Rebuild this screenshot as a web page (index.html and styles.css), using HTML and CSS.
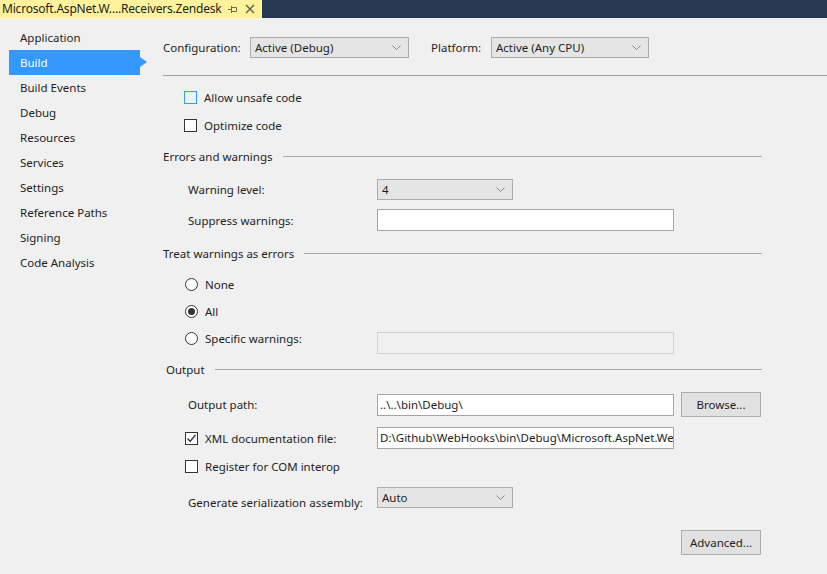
FILE: index.html
```html
<!DOCTYPE html>
<html>
<head>
<meta charset="utf-8">
<link rel="stylesheet" href="styles.css">
</head>
<body>
<div class="tabbar">
  <div class="tab">
    <span class="tab-title">Microsoft.AspNet.W....Receivers.Zendesk</span>
    <svg class="pin" width="10" height="8" viewBox="0 0 10 8"><path d="M0 4.5H3.5M3.5 1V8M3.5 2.5H8.5V6.5H3.5" fill="none" stroke="#6b6a55" stroke-width="1"/></svg>
    <svg class="close" width="10" height="10" viewBox="0 0 10 10"><path d="M1 1L9 9M9 1L1 9" fill="none" stroke="#5e5d4c" stroke-width="1.4"/></svg>
  </div>
</div>
<div class="tabgap"></div>
<div class="main">
  <nav class="sidebar">
    <div class="nav-item">Application</div>
    <div class="nav-item active">Build</div>
    <div class="nav-item">Build Events</div>
    <div class="nav-item">Debug</div>
    <div class="nav-item">Resources</div>
    <div class="nav-item">Services</div>
    <div class="nav-item">Settings</div>
    <div class="nav-item">Reference Paths</div>
    <div class="nav-item">Signing</div>
    <div class="nav-item">Code Analysis</div>
  </nav>
  <div class="content">
    <div class="config-row">
      <span class="lbl-config">Configuration:</span>
      <div class="combo combo-config"><span>Active (Debug)</span><svg width="9" height="5" viewBox="0 0 9 5"><path d="M0.5 0.5L4.5 4.5L8.5 0.5" fill="none" stroke="#8a8a8a"/></svg></div>
      <span class="lbl-platform">Platform:</span>
      <div class="combo combo-platform"><span>Active (Any CPU)</span><svg width="9" height="5" viewBox="0 0 9 5"><path d="M0.5 0.5L4.5 4.5L8.5 0.5" fill="none" stroke="#8a8a8a"/></svg></div>
    </div>
    <div class="rule"></div>

    <div class="section">
      <div class="checks">
        <div class="check-row"><span class="cb cb-hover"></span>Allow unsafe code</div>
        <div class="check-row"><span class="cb"></span>Optimize code</div>
      </div>

      <div class="group-head">Errors and warnings</div>
      <div class="form-row row-warn">
        <span class="form-lbl">Warning level:</span>
        <div class="combo combo-small"><span>4</span><svg width="9" height="5" viewBox="0 0 9 5"><path d="M0.5 0.5L4.5 4.5L8.5 0.5" fill="none" stroke="#8a8a8a"/></svg></div>
      </div>
      <div class="form-row row-suppress">
        <span class="form-lbl">Suppress warnings:</span>
        <div class="tb"></div>
      </div>

      <div class="group-head head-treat">Treat warnings as errors</div>
      <div class="radios">
        <div class="radio-row"><span class="rb"></span>None</div>
        <div class="radio-row"><span class="rb rb-on"></span>All</div>
        <div class="radio-row"><span class="rb"></span><span class="radio-lbl">Specific warnings:</span><div class="tb tb-disabled"></div></div>
      </div>

      <div class="group-head head-output">Output</div>
      <div class="form-row row-outpath">
        <span class="form-lbl">Output path:</span>
        <div class="tb">..\..\bin\Debug\</div>
        <div class="btn">Browse...</div>
      </div>
      <div class="form-row row-xml">
        <span class="form-lbl check-lbl"><span class="cb cb-checked"><svg width="11" height="11" viewBox="0 0 11 11"><path d="M1.5 5.5L4.2 8.2L9.5 2" fill="none" stroke="#333" stroke-width="1.3"/></svg></span>XML documentation file:</span>
        <div class="tb">D:\Github\WebHooks\bin\Debug\Microsoft.AspNet.WebHooks.Receivers.Zendesk.xml</div>
      </div>
      <div class="form-row row-com">
        <span class="form-lbl check-lbl"><span class="cb"></span>Register for COM interop</span>
      </div>
      <div class="form-row row-serial">
        <span class="form-lbl serial-lbl">Generate serialization assembly:</span>
        <div class="combo combo-small"><span>Auto</span><svg width="9" height="5" viewBox="0 0 9 5"><path d="M0.5 0.5L4.5 4.5L8.5 0.5" fill="none" stroke="#8a8a8a"/></svg></div>
      </div>
      <div class="row-advanced">
        <div class="btn">Advanced...</div>
      </div>
    </div>
  </div>
</div>
</body>
</html>
```
FILE: styles.css
```css
* { box-sizing: border-box; }
body {
  margin: 0;
  width: 827px;
  height: 574px;
  overflow: hidden;
  background: #f0f0f0;
  font-family: "Noto Sans", "Open Sans", sans-serif;
  font-size: 11.5px;
  color: #1e1e1e;
}
.tabbar { height: 18px; background: #293955; display: flex; }
.tab {
  width: 262px;
  background: #fff29d;
  display: flex;
  align-items: center;
  padding: 0 7px 0 2px;
}
.tab-title { flex: 1; line-height: 18px; font-size: 12px; letter-spacing: -0.2px; white-space: nowrap; overflow: hidden; color: #1e1e1e; }
.pin { margin-left: 4px; flex: none; }
.close { margin-left: 7px; flex: none; }
.tabgap { height: 2px; background: linear-gradient(to right, #faf6dc 0 262px, #eceef2 262px); }

.main { display: flex; }
.sidebar { width: 145px; flex: none; padding-top: 5px; }
.nav-item { height: 25px; line-height: 25px; padding-left: 20px; white-space: nowrap; position: relative; }
.nav-item.active {
  background: #3399ff;
  color: #fff;
  margin-left: 9px;
  padding-left: 11px;
  width: 131px;
}
.nav-item.active::after {
  content: "";
  position: absolute;
  right: -7px;
  top: 7px;
  border-left: 7px solid #3399ff;
  border-top: 5.5px solid transparent;
  border-bottom: 5.5px solid transparent;
}

.content { flex: 1; padding-top: 17px; padding-left: 18px; }
.config-row { display: flex; align-items: center; height: 21px; }
.lbl-config { width: 87px; }
.lbl-platform { margin-left: 22px; width: 60px; }
.combo {
  height: 21px;
  background: #e5e5e5;
  border: 1px solid #acacac;
  display: flex;
  align-items: center;
  justify-content: space-between;
  padding: 0 7px 0 4px;
  white-space: nowrap;
}
.combo-config { width: 159px; }
.combo-platform { width: 158px; }
.combo-small { width: 136px; }
.rule { height: 1px; background: #a0a0a0; margin-top: 17px; }

.section { width: 599px; }
.checks { margin-top: 7px; padding-left: 21px; }
.check-row { height: 28px; display: flex; align-items: center; }
.cb {
  width: 13px;
  height: 13px;
  border: 1px solid #333;
  background: #fff;
  margin-right: 7px;
  flex: none;
  display: inline-flex;
  align-items: center;
  justify-content: center;
}
.cb-hover { border-color: #3399ff; background: #eaf3fc; }

.group-head { display: flex; align-items: center; height: 20px; margin-top: 7px; white-space: nowrap; }
.group-head::after { content: ""; flex: 1; height: 1px; background: #a8a8a8; margin-left: 10px; }
.head-treat { margin-top: 12px; }
.head-output { margin-top: 7px; padding-left: 3px; }

.form-row { display: flex; align-items: center; padding-left: 25px; }
.form-lbl { width: 189px; flex: none; white-space: nowrap; }
.check-lbl { display: flex; align-items: center; margin-left: -3px; width: 192px; }
.row-warn { margin-top: 13px; height: 21px; }
.row-suppress { margin-top: 9px; height: 22px; }

.tb {
  width: 297px;
  height: 22px;
  background: #fff;
  border: 1px solid #a5a5a5;
  padding-left: 2px;
  line-height: 20px;
  white-space: nowrap;
  overflow: hidden;
}
.tb-disabled { background: #f0f0f0; border-color: #d2d2d2; align-self: flex-start; margin-top: 7px; }

.radios { margin-top: 8px; padding-left: 22px; }
.radio-row { height: 27px; display: flex; align-items: center; }
.radio-lbl { width: 172px; flex: none; }
.rb {
  width: 13px;
  height: 13px;
  border: 1px solid #333;
  border-radius: 50%;
  background: #fff;
  margin-right: 7px;
  flex: none;
  display: inline-flex;
  align-items: center;
  justify-content: center;
}
.rb-on::after { content: ""; width: 7px; height: 7px; border-radius: 50%; background: #333; }

.btn {
  width: 80px;
  height: 25px;
  background: #e1e1e1;
  border: 1px solid #adadad;
  display: flex;
  align-items: center;
  justify-content: center;
  white-space: nowrap;
}
.row-outpath { margin-top: 13px; height: 25px; }
.row-outpath .btn { margin-left: 7px; }
.row-xml { margin-top: 10px; height: 22px; }
.row-com { margin-top: 6px; height: 22px; }
.row-serial { margin-top: 10px; height: 21px; align-items: flex-start; }
.serial-lbl { margin-top: 8px; line-height: 16px; }
.row-advanced { margin-top: 22px; display: flex; justify-content: flex-end; padding-right: 1px; }
```
